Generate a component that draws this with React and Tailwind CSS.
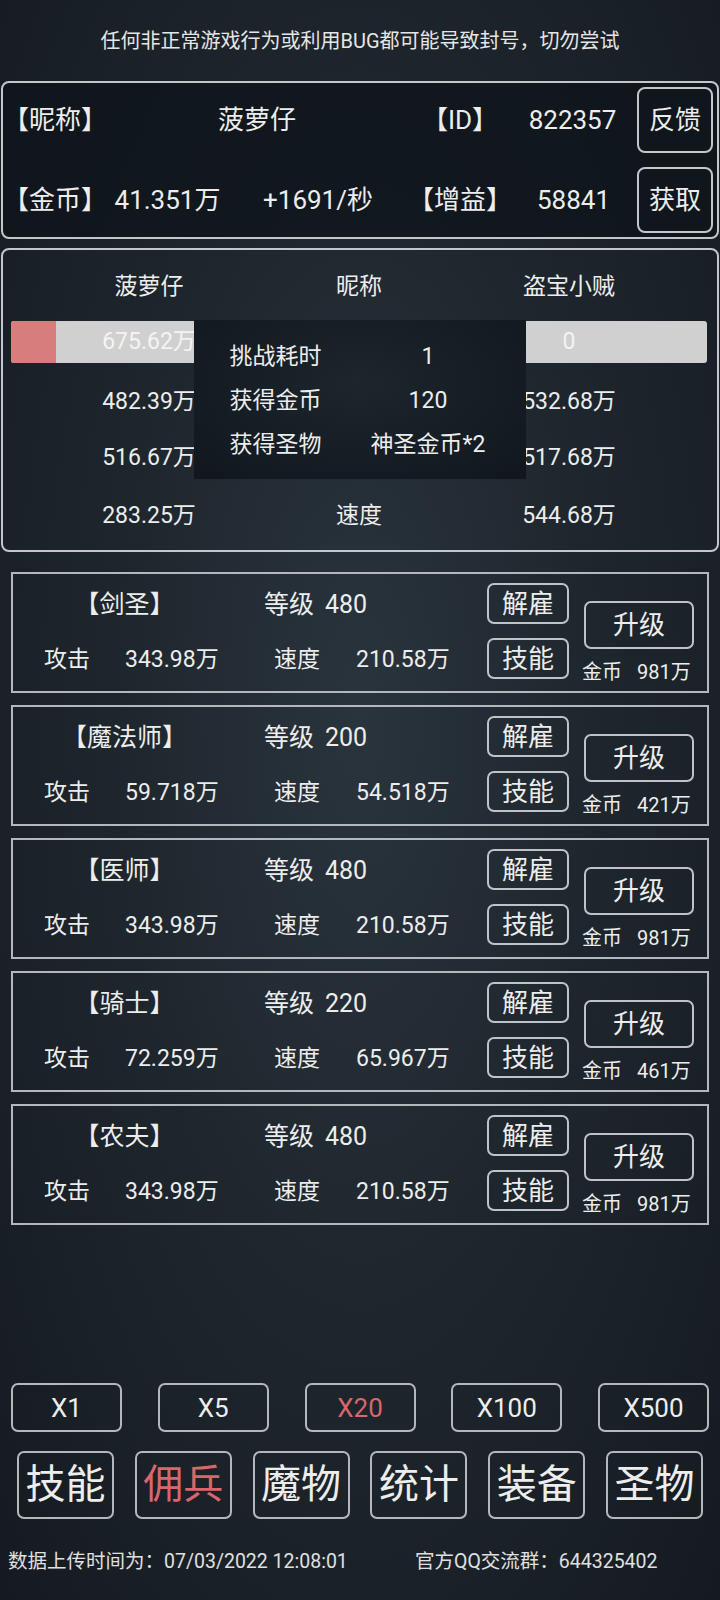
import React from "react";

const FONT = "font-['Roboto','Noto_Sans_CJK_SC',sans-serif]";

const heroes = [
  { name: "【剑圣】", lv: 480, atk: "343.98万", spd: "210.58万", cost: "981万" },
  { name: "【魔法师】", lv: 200, atk: "59.718万", spd: "54.518万", cost: "421万" },
  { name: "【医师】", lv: 480, atk: "343.98万", spd: "210.58万", cost: "981万" },
  { name: "【骑士】", lv: 220, atk: "72.259万", spd: "65.967万", cost: "461万" },
  { name: "【农夫】", lv: 480, atk: "343.98万", spd: "210.58万", cost: "981万" },
];

function SmallBtn({ children }) {
  return (
    <div className="w-[82px] h-[41px] border-2 border-[#bfc3c7] rounded-[7px] flex items-center justify-center text-[26px] leading-none">
      {children}
    </div>
  );
}

function HeroCard({ h }) {
  return (
    <div className="mx-[11px] w-[698px] h-[121px] border-2 border-[#b3b8bd] flex">
      <div className="w-[474px] flex flex-col pt-[6px]">
        <div className="h-[50px] flex items-center text-[25px]">
          <div className="w-[223px] text-center whitespace-nowrap">{h.name}</div>
          <div className="pl-[28px] whitespace-nowrap flex gap-[11px]">
            <span>等级</span>
            <span>{h.lv}</span>
          </div>
        </div>
        <div className="h-[60px] flex items-center text-[23px] pl-[31px]">
          <div className="w-[81px] whitespace-nowrap">攻击</div>
          <div className="w-[149px] whitespace-nowrap">{h.atk}</div>
          <div className="w-[82px] whitespace-nowrap">速度</div>
          <div className="whitespace-nowrap">{h.spd}</div>
        </div>
      </div>
      <div className="w-[82px] flex flex-col pt-[9px] gap-[14px]">
        <SmallBtn>解雇</SmallBtn>
        <SmallBtn>技能</SmallBtn>
      </div>
      <div className="ml-[15px] w-[110px] flex flex-col pt-[27px]">
        <div className="w-[110px] h-[48px] border-2 border-[#bfc3c7] rounded-[7px] flex items-center justify-center text-[26px] leading-none">
          升级
        </div>
        <div className="mt-[11px] h-[24px] flex items-center gap-[15px] text-[20px] whitespace-nowrap -ml-[2px]">
          <span>金币</span>
          <span>{h.cost}</span>
        </div>
      </div>
    </div>
  );
}

export default function App() {
  return (
    <div
      className={`${FONT} min-h-[1600px] w-[720px] flex flex-col text-[#ededed] bg-[radial-gradient(ellipse_at_50%_45%,#2a343d_0%,#1f272e_45%,#141a20_100%)]`}
    >
      {/* disclaimer */}
      <div className="h-[81px] flex items-center justify-center text-[20px] text-[#e6e6e6] whitespace-nowrap">
        任何非正常游戏行为或利用BUG都可能导致封号，切勿尝试
      </div>

      {/* top info panel */}
      <div className="mx-[1px] h-[158px] border-2 border-[#c3c7cb] rounded-[8px] bg-[#0e141a]/80 flex flex-col pt-[4px] gap-[14px] text-[26px]">
        <div className="h-[66px] flex items-center">
          <div className="w-[101px] text-center whitespace-nowrap">【昵称】</div>
          <div className="w-[306px] text-center whitespace-nowrap">菠萝仔</div>
          <div className="w-[100px] text-center whitespace-nowrap">【ID】</div>
          <div className="w-[125px] text-center whitespace-nowrap">822357</div>
          <div className="ml-[2px] w-[76px] h-[66px] border-2 border-[#c3c7cb] rounded-[8px] flex items-center justify-center leading-none">
            反馈
          </div>
        </div>
        <div className="h-[66px] flex items-center">
          <div className="w-[101px] text-center whitespace-nowrap">【金币】</div>
          <div className="w-[127px] text-center whitespace-nowrap">41.351万</div>
          <div className="w-[174px] text-center whitespace-nowrap">+1691/秒</div>
          <div className="w-[110px] text-center whitespace-nowrap">【增益】</div>
          <div className="w-[117px] text-center whitespace-nowrap">58841</div>
          <div className="ml-[5px] w-[76px] h-[66px] border-2 border-[#c3c7cb] rounded-[8px] flex items-center justify-center leading-none">
            获取
          </div>
        </div>
      </div>

      {/* battle panel */}
      <div className="relative mt-[9px] mx-[1px] h-[304px] border-2 border-[#c3c7cb] rounded-[8px] pt-[12px] pl-[8px] text-[23px]">
        <div className="grid grid-cols-[276px_144px_276px] h-[50px] items-center text-center">
          <div>菠萝仔</div>
          <div>昵称</div>
          <div>盗宝小贼</div>
        </div>
        <div className="mt-[9px] grid grid-cols-[276px_144px_276px] h-[42px] items-center text-center">
          <div className="relative h-[42px] rounded-[3px] bg-[#d0d0d0] overflow-hidden flex items-center justify-center">
            <div className="absolute left-0 top-0 bottom-0 w-[45px] bg-[#d77d7e]" />
            <span className="relative text-[#f4f4f4]">675.62万</span>
          </div>
          <div />
          <div className="h-[42px] rounded-[3px] bg-[#d0d0d0] flex items-center justify-center text-[#f4f4f4]">
            0
          </div>
        </div>
        <div className="mt-[11px] grid grid-cols-[276px_144px_276px] h-[56px] items-center text-center">
          <div>482.39万</div>
          <div />
          <div>532.68万</div>
        </div>
        <div className="grid grid-cols-[276px_144px_276px] h-[56px] items-center text-center">
          <div>516.67万</div>
          <div />
          <div>517.68万</div>
        </div>
        <div className="grid grid-cols-[276px_144px_276px] h-[60px] items-center text-center">
          <div>283.25万</div>
          <div>速度</div>
          <div>544.68万</div>
        </div>

        {/* result popup */}
        <div className="absolute left-[191px] top-[70px] w-[332px] h-[159px] bg-[radial-gradient(ellipse_at_50%_40%,#1d252d_0%,#141b22_70%,#11171d_100%)] pt-[15px]">
          {[
            ["挑战耗时", "1"],
            ["获得金币", "120"],
            ["获得圣物", "神圣金币*2"],
          ].map(([k, v]) => (
            <div key={k} className="h-[44px] flex items-center">
              <div className="w-[163px] text-center whitespace-nowrap">{k}</div>
              <div className="w-[142px] text-center whitespace-nowrap">{v}</div>
            </div>
          ))}
        </div>
      </div>

      {/* hero cards */}
      <div className="mt-[20px] flex flex-col gap-[12px]">
        {heroes.map((h, i) => (
          <HeroCard key={i} h={h} />
        ))}
      </div>

      {/* bottom */}
      <div className="mt-auto flex flex-col">
        <div className="px-[11px] flex justify-between">
          {["X1", "X5", "X20", "X100", "X500"].map((x) => (
            <div
              key={x}
              className={`w-[111px] h-[49px] border-2 border-[#b3b8bd] rounded-[7px] flex items-center justify-center text-[26px] leading-none ${
                x === "X20" ? "text-[#d9666a]" : ""
              }`}
            >
              {x}
            </div>
          ))}
        </div>
        <div className="mt-[19px] px-[17px] flex justify-between">
          {["技能", "佣兵", "魔物", "统计", "装备", "圣物"].map((t) => (
            <div
              key={t}
              className={`w-[97px] h-[68px] border-2 border-[#b3b8bd] rounded-[7px] flex items-center justify-center text-[40px] leading-none ${
                t === "佣兵" ? "text-[#d9666a]" : ""
              }`}
            >
              {t}
            </div>
          ))}
        </div>
        <div className="mt-[30px] h-[26px] flex items-center text-[19.5px] text-[#e0e0e0] whitespace-nowrap">
          <div className="pl-[8px] w-[415px]">数据上传时间为：07/03/2022 12:08:01</div>
          <div>官方QQ交流群：644325402</div>
        </div>
        <div className="h-[25px]" />
      </div>
    </div>
  );
}
